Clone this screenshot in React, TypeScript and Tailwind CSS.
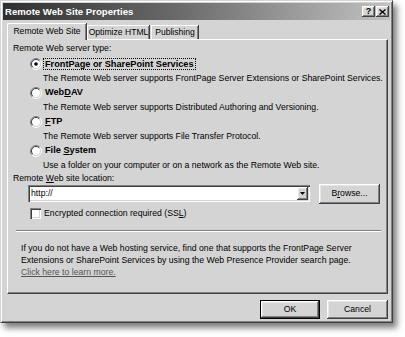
import React from "react";

const raised =
  "bg-[#d4d4d4] shadow-[inset_-1px_-1px_0_#404040,inset_1px_1px_0_#ffffff,inset_-2px_-2px_0_#808080,inset_2px_2px_0_#e6e6e6]";
const sunken =
  "bg-white shadow-[inset_1px_1px_0_#808080,inset_2px_2px_0_#404040,inset_-1px_-1px_0_#ffffff,inset_-2px_-2px_0_#d4d4d4]";

function Radio({ checked }: { checked?: boolean }) {
  return (
    <svg width="12" height="12" viewBox="0 0 12 12" className="shrink-0">
      <circle cx="6" cy="6" r="4.5" fill="#fff" />
      <path d="M2.1 9.9 A5.5 5.5 0 0 1 9.9 2.1" stroke="#808080" strokeWidth="1" fill="none" />
      <path d="M9.9 2.1 A5.5 5.5 0 0 1 2.1 9.9" stroke="#ffffff" strokeWidth="1" fill="none" />
      <path d="M2.8 9.2 A4.5 4.5 0 0 1 9.2 2.8" stroke="#404040" strokeWidth="1" fill="none" />
      <path d="M9.2 2.8 A4.5 4.5 0 0 1 2.8 9.2" stroke="#d4d4d4" strokeWidth="1" fill="none" />
      {checked && <circle cx="6" cy="6" r="1.8" fill="#000" />}
    </svg>
  );
}

function U({ children }: { children: React.ReactNode }) {
  return <span className="underline underline-offset-[1px]">{children}</span>;
}

export default function App() {
  const font = { fontFamily: '"Liberation Sans", Arial, sans-serif' };
  return (
    <div className="w-[405px] h-[337px] bg-white relative overflow-hidden" style={font}>
      <div className="w-[393px] h-[323px] bg-[#d4d4d4] border border-t-[#d4d4d4] border-l-[#d4d4d4] border-r-[#404040] border-b-[#404040] shadow-[inset_1px_1px_0_#ffffff,inset_-1px_-1px_0_#808080,4px_5px_6px_rgba(0,0,0,0.5)] p-[1px] flex flex-col">
        {/* Title bar */}
        <div className="h-[17px] mt-[1px] mx-[1px] flex items-center justify-between bg-[linear-gradient(90deg,#2f2f2f_0%,#6a6a6a_45%,#c2c2c2_100%)]">
          <span className="text-white font-bold text-[9.6px] pl-[2px] leading-none">
            Remote Web Site Properties
          </span>
          <div className="flex gap-[1px] pr-[1px] items-center">
            <div className={`w-[13px] h-[11px] ${raised} flex items-center justify-center`}>
              <span className="text-[9px] font-bold leading-none text-black">?</span>
            </div>
            <div className={`w-[13px] h-[11px] ${raised} flex items-center justify-center`}>
              <svg width="7" height="6" viewBox="0 0 7 6">
                <path d="M0.5 0.5 L6.5 5.5 M6.5 0.5 L0.5 5.5" stroke="#000" strokeWidth="1.4" />
              </svg>
            </div>
          </div>
        </div>

        {/* Tabs */}
        <div className="ml-[5px] mr-[3px] mt-[3px] flex items-end h-[17px] relative z-10">
          <div className="h-[17px] w-[79px] bg-[#d4d4d4] border-t border-l border-white shadow-[inset_-1px_0_0_#808080,1px_0_0_#404040] rounded-tl-[2px] flex items-center justify-center text-[8.6px] text-black pb-[1px]">
            Remote Web Site
          </div>
          <div className="h-[14px] w-[62px] ml-[1px] mb-[1px] border-t border-l border-white shadow-[inset_-1px_0_0_#808080,1px_0_0_#404040] flex items-center justify-center text-[8.6px] text-black">
            Optimize HTML
          </div>
          <div className="h-[14px] w-[47px] ml-[2px] mb-[1px] border-t border-l border-white shadow-[inset_-1px_0_0_#808080,1px_0_0_#404040] flex items-center justify-center text-[8.6px] text-black">
            Publishing
          </div>
        </div>

        {/* Panel */}
        <div className="ml-[5px] mr-[3px] -mt-[1px] h-[255px] border-t border-l border-white border-r border-b border-r-[#404040] border-b-[#404040] shadow-[inset_-1px_-1px_0_#808080] text-[8.7px] text-black">
          <div className="h-[13px] mt-[2px] pl-[5px] flex items-center">Remote Web server type:</div>
          <div className="mt-[2px]">
            <div className="h-[14.5px] flex items-center pl-[22px]">
              <Radio checked />
              <span className="ml-[1px] px-[2px] font-bold text-[9.2px] outline outline-1 outline-dotted outline-[#000] -outline-offset-1 leading-[12px]">
                FrontPage or SharePoint Services
              </span>
            </div>
            <div className="h-[14.5px] flex items-center pl-[35px]">
              The Remote Web server supports FrontPage Server Extensions or SharePoint Services.
            </div>
            <div className="h-[14.5px] flex items-center pl-[22px]">
              <Radio />
              <span className="ml-[3px] font-bold text-[9.2px]">
                Web<U>D</U>AV
              </span>
            </div>
            <div className="h-[14.5px] flex items-center pl-[35px]">
              The Remote Web server supports Distributed Authoring and Versioning.
            </div>
            <div className="h-[14.5px] flex items-center pl-[22px]">
              <Radio />
              <span className="ml-[3px] font-bold text-[9.2px]">
                <U>F</U>TP
              </span>
            </div>
            <div className="h-[14.5px] flex items-center pl-[35px]">
              The Remote Web server supports File Transfer Protocol.
            </div>
            <div className="h-[14.5px] flex items-center pl-[22px]">
              <Radio />
              <span className="ml-[3px] font-bold text-[9.2px]">
                File <U>S</U>ystem
              </span>
            </div>
            <div className="h-[14.5px] flex items-center pl-[35px]">
              Use a folder on your computer or on a network as the Remote Web site.
            </div>
          </div>
          <div className="h-[12px] flex items-center pl-[5px]">
            <span>
              Remote <U>W</U>eb site location:
            </span>
          </div>
          <div className="h-[20px] flex items-start pl-[20px] mt-[-1px]">
            <div className={`mt-[1px] w-[282px] h-[17px] ${sunken} flex items-center justify-between pl-[3px] pr-[2px]`}>
              <span>http://</span>
              <div className={`w-[11px] h-[13px] ${raised} flex items-center justify-center`}>
                <svg width="5" height="3" viewBox="0 0 5 3">
                  <path d="M0 0 L5 0 L2.5 3 Z" fill="#000" />
                </svg>
              </div>
            </div>
            <div className={`ml-[9px] w-[61px] h-[20px] ${raised} flex items-center justify-center`}>
              <span>
                B<U>r</U>owse...
              </span>
            </div>
          </div>
          <div className="h-[13px] mt-[3px] flex items-center pl-[22px]">
            <div className={`w-[11px] h-[11px] ${sunken}`} />
            <span className="ml-[3px]">
              Encrypted connection required (SS<U>L</U>)
            </span>
          </div>
          <div className="mt-[10px] ml-[8px] mr-[6px] h-[2px] border-t border-[#808080] border-b border-b-white" />
          <div className="mt-[10px] pl-[13px] leading-[12px]">
            <div>If you do not have a Web hosting service, find one that supports the FrontPage Server</div>
            <div>Extensions or SharePoint Services by using the Web Presence Provider search page.</div>
            <div className="text-[#555] underline underline-offset-[1px]">Click here to learn more.</div>
          </div>
        </div>

        {/* Buttons */}
        <div className="mt-[6px] mr-[3px] flex justify-end gap-[7px] text-[8.7px] text-black">
          <div className="w-[60px] h-[19px] border border-black">
            <div className={`w-full h-full ${raised} flex items-center justify-center`}>OK</div>
          </div>
          <div className={`w-[61px] h-[19px] ${raised} flex items-center justify-center`}>Cancel</div>
        </div>
      </div>
    </div>
  );
}
